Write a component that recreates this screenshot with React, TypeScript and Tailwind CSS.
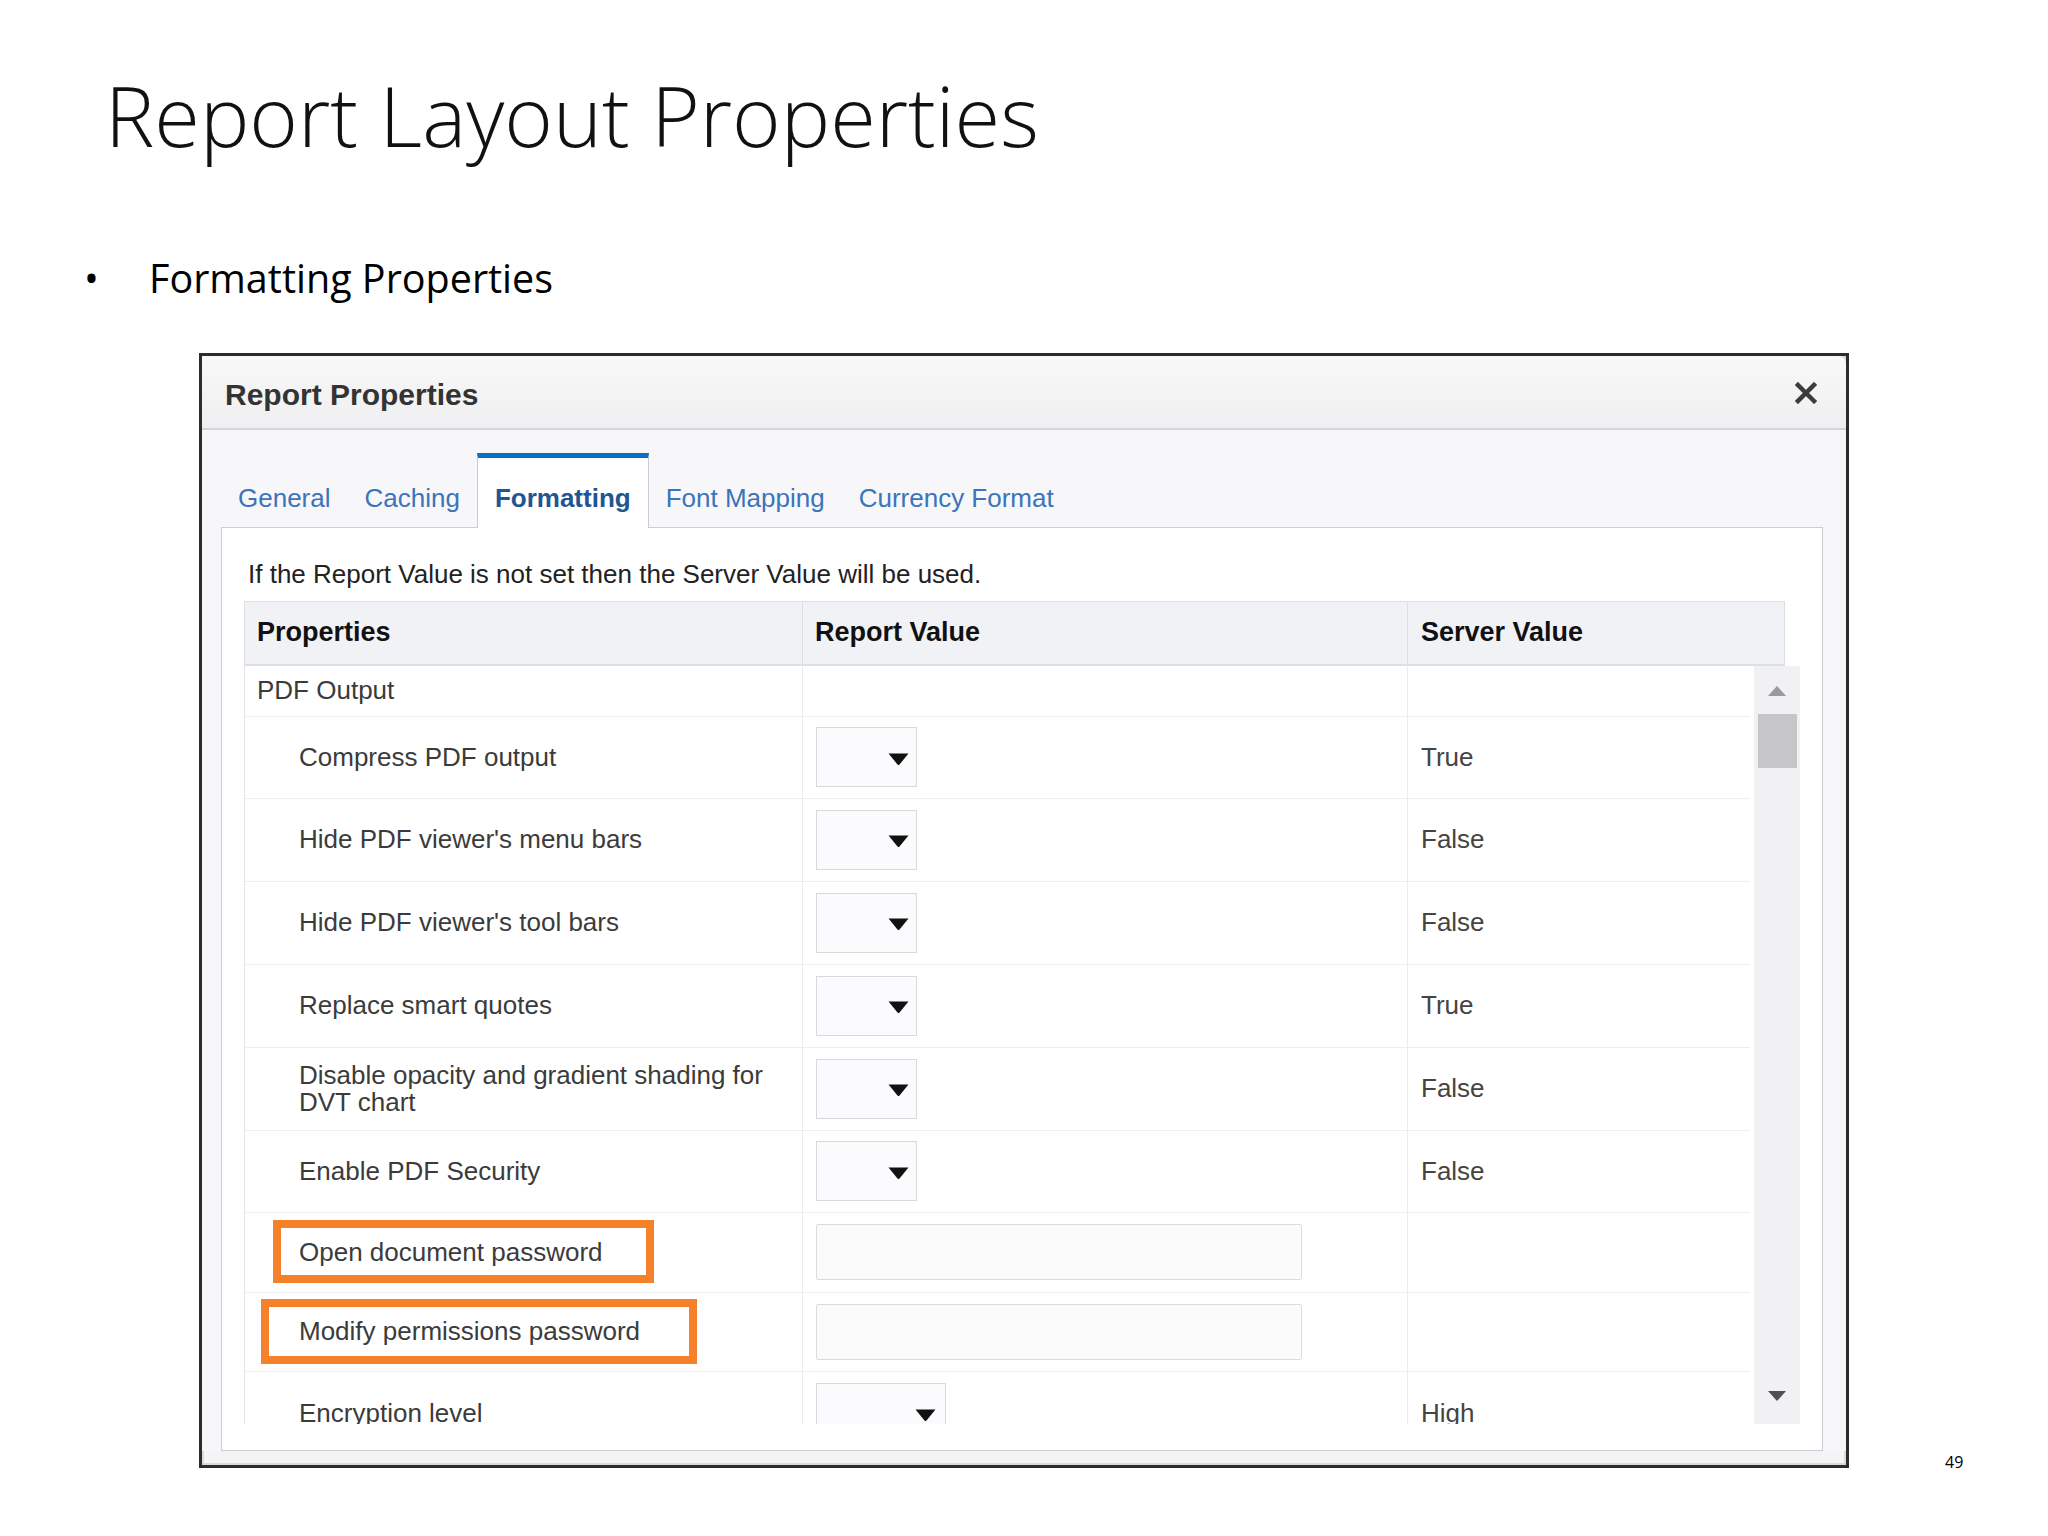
import React from "react";

type Row = { label: string[]; server: string; h: string };

const rows: Row[] = [
  { label: ["Compress PDF output"], server: "True", h: "h-[82px]" },
  { label: ["Hide PDF viewer's menu bars"], server: "False", h: "h-[83px]" },
  { label: ["Hide PDF viewer's tool bars"], server: "False", h: "h-[83px]" },
  { label: ["Replace smart quotes"], server: "True", h: "h-[83px]" },
  { label: ["Disable opacity and gradient shading for", "DVT chart"], server: "False", h: "h-[83px]" },
  { label: ["Enable PDF Security"], server: "False", h: "h-[82px]" },
];

const tabs = ["General", "Caching", "Formatting", "Font Mapping", "Currency Format"];

function Caret() {
  return (
    <svg width="21" height="14" viewBox="0 0 21 14" className="block">
      <path d="M0.5 1.5 H20.5 L11.5 12.5 Q10.5 13.6 9.5 12.5 Z" fill="#111" />
    </svg>
  );
}

function Select({ wide }: { wide?: boolean }) {
  return (
    <div
      className={`${wide ? "w-[130px]" : "w-[101px]"} h-[60px] border border-[#d9d9dc] bg-[#fbfbfd] flex items-center justify-end ${wide ? "pr-[9px]" : "pr-[7px]"} pt-[3px]`}
    >
      <Caret />
    </div>
  );
}

function Password() {
  return <div className="w-[486px] h-[56px] border border-[#dcdcdf] rounded-[2px] bg-[#fbfbfc]" />;
}

export default function App() {
  return (
    <div className="w-[2048px] h-[1536px] bg-white overflow-hidden text-black">
      {/* slide title */}
      <h1 className="pl-[105px] pt-[73px] text-[83px] leading-none font-light font-['Open_Sans',sans-serif] text-[#111]">
        Report Layout Properties
      </h1>

      <div className="flex pl-[84px] mt-[103px] text-[39.5px] leading-none font-['Open_Sans',sans-serif]">
        <span className="w-[65px]">•</span>
        <span>Formatting Properties</span>
      </div>

      <div className="flex mt-[54px]">
        {/* dialog */}
        <div className="ml-[199px] w-[1650px] h-[1115px] border-[3px] border-[#2c2c2c] bg-[#f4f4f6] font-['Liberation_Sans',Arial,sans-serif] shadow-[inset_0_0_0_2px_#dadadc]">
          {/* header */}
          <div className="h-[74px] border-b-2 border-[#d6d6d9] bg-gradient-to-b from-[#f8f8f8] to-[#efeff1] rounded-tr-[8px] flex items-center justify-between pl-[23px] pr-[29px] pt-[6px]">
            <span className="text-[30px] leading-none font-bold text-[#333]">Report Properties</span>
            <svg width="22" height="22" viewBox="0 0 22 22" className="mb-[4px]">
              <path d="M3 3 L19 19 M19 3 L3 19" stroke="#3c3c3c" strokeWidth="4.5" strokeLinecap="square" />
            </svg>
          </div>

          <div className="pl-[19px] pr-[23px] pt-[23px] bg-[#f7f7f9]">
            {/* tabs */}
            <div className="flex items-end h-[74px]">
              {tabs.map((t) =>
                t === "Formatting" ? (
                  <div
                    key={t}
                    className="relative z-10 -mb-px h-[75px] px-[17px] pb-[17px] flex items-end bg-white border-t-[5px] border-x border-t-[#0b6fc3] border-x-[#c9cdd2] text-[26px] leading-[26px] font-bold text-[#1f5592]"
                  >
                    {t}
                  </div>
                ) : (
                  <div key={t} className="h-[74px] px-[17px] pb-[16px] flex items-end text-[26px] leading-[26px] text-[#3a74ba]">
                    {t}
                  </div>
                )
              )}
            </div>

            {/* panel */}
            <div className="bg-white border border-[#cbcfd4] pt-[33px] pl-[22px] pr-[22px] pb-[26px]">
              <div className="pl-[4px] text-[26px] leading-[26px] text-[#222]">
                If the Report Value is not set then the Server Value will be used.
              </div>

              <div className="mt-[14px] w-[1556px]">
                {/* table header */}
                <div className="w-[1541px] h-[65px] flex bg-[#f1f2f6] border border-b-2 border-[#dcdfe4] text-[27px] leading-[27px] font-bold text-[#111]">
                  <div className="w-[558px] border-r border-[#dcdfe4] flex items-center pl-[12px]">Properties</div>
                  <div className="w-[605px] border-r border-[#dcdfe4] flex items-center pl-[12px]">Report Value</div>
                  <div className="flex-1 flex items-center pl-[13px]">Server Value</div>
                </div>

                {/* table body */}
                <div className="flex h-[758px] overflow-hidden">
                  <div className="w-[1506px] border-l border-[#e3e5e9] text-[26px] leading-[27px] text-[#3b3b3b]">
                    <div className="flex h-[51px] border-b border-[#eceef1]">
                      <div className="w-[558px] border-r border-[#eaecef] flex items-center pl-[12px]">PDF Output</div>
                      <div className="w-[605px] border-r border-[#eaecef]" />
                      <div className="flex-1" />
                    </div>

                    {rows.map((r) => (
                      <div key={r.label[0]} className={`flex ${r.h} border-b border-[#eceef1]`}>
                        <div className="w-[558px] border-r border-[#eaecef] flex flex-col justify-center pl-[54px]">
                          {r.label.map((l) => (
                            <span key={l}>{l}</span>
                          ))}
                        </div>
                        <div className="w-[605px] border-r border-[#eaecef] flex items-center pl-[13px]">
                          <Select />
                        </div>
                        <div className="flex-1 flex items-center pl-[13px] text-[#444]">{r.server}</div>
                      </div>
                    ))}

                    {["Open document password", "Modify permissions password"].map((l, i) => (
                      <div key={l} className={`flex ${i === 0 ? "h-[80px]" : "h-[79px]"} border-b border-[#eceef1]`}>
                        <div className="relative w-[558px] border-r border-[#eaecef] flex items-center pl-[54px]">
                          <span className="relative z-10">{l}</span>
                          {i === 0 ? (
                            <div className="absolute left-[28px] top-[7px] w-[381px] h-[63px] border-[8px] border-[#f5822a]" />
                          ) : (
                            <div className="absolute left-[16px] top-[6px] w-[436px] h-[65px] border-[8px] border-[#f5822a]" />
                          )}
                        </div>
                        <div className="w-[605px] border-r border-[#eaecef] flex items-center pl-[13px]">
                          <Password />
                        </div>
                        <div className="flex-1" />
                      </div>
                    ))}

                    <div className="flex h-[83px]">
                      <div className="w-[558px] border-r border-[#eaecef] flex items-center pl-[54px]">Encryption level</div>
                      <div className="w-[605px] border-r border-[#eaecef] flex items-center pl-[13px]">
                        <Select wide />
                      </div>
                      <div className="flex-1 flex items-center pl-[13px] text-[#444]">High</div>
                    </div>
                  </div>

                  {/* scrollbar */}
                  <div className="ml-[4px] w-[46px] bg-[#f1f1f4] flex flex-col items-center">
                    <svg width="18" height="10" viewBox="0 0 18 10" className="mt-[20px]">
                      <path d="M0 10 L9 0 L18 10 Z" fill="#9a9a9d" />
                    </svg>
                    <div className="mt-[18px] w-[39px] h-[54px] bg-[#c6c6c8]" />
                    <div className="flex-1" />
                    <svg width="18" height="10" viewBox="0 0 18 10" className="mb-[23px]">
                      <path d="M0 0 L18 0 L9 10 Z" fill="#4f4f52" />
                    </svg>
                  </div>
                </div>
              </div>
            </div>
          </div>
        </div>

        <div className="self-end ml-[96px] -mb-[2px] text-[16px] leading-none font-['Open_Sans',sans-serif]">49</div>
      </div>
    </div>
  );
}
